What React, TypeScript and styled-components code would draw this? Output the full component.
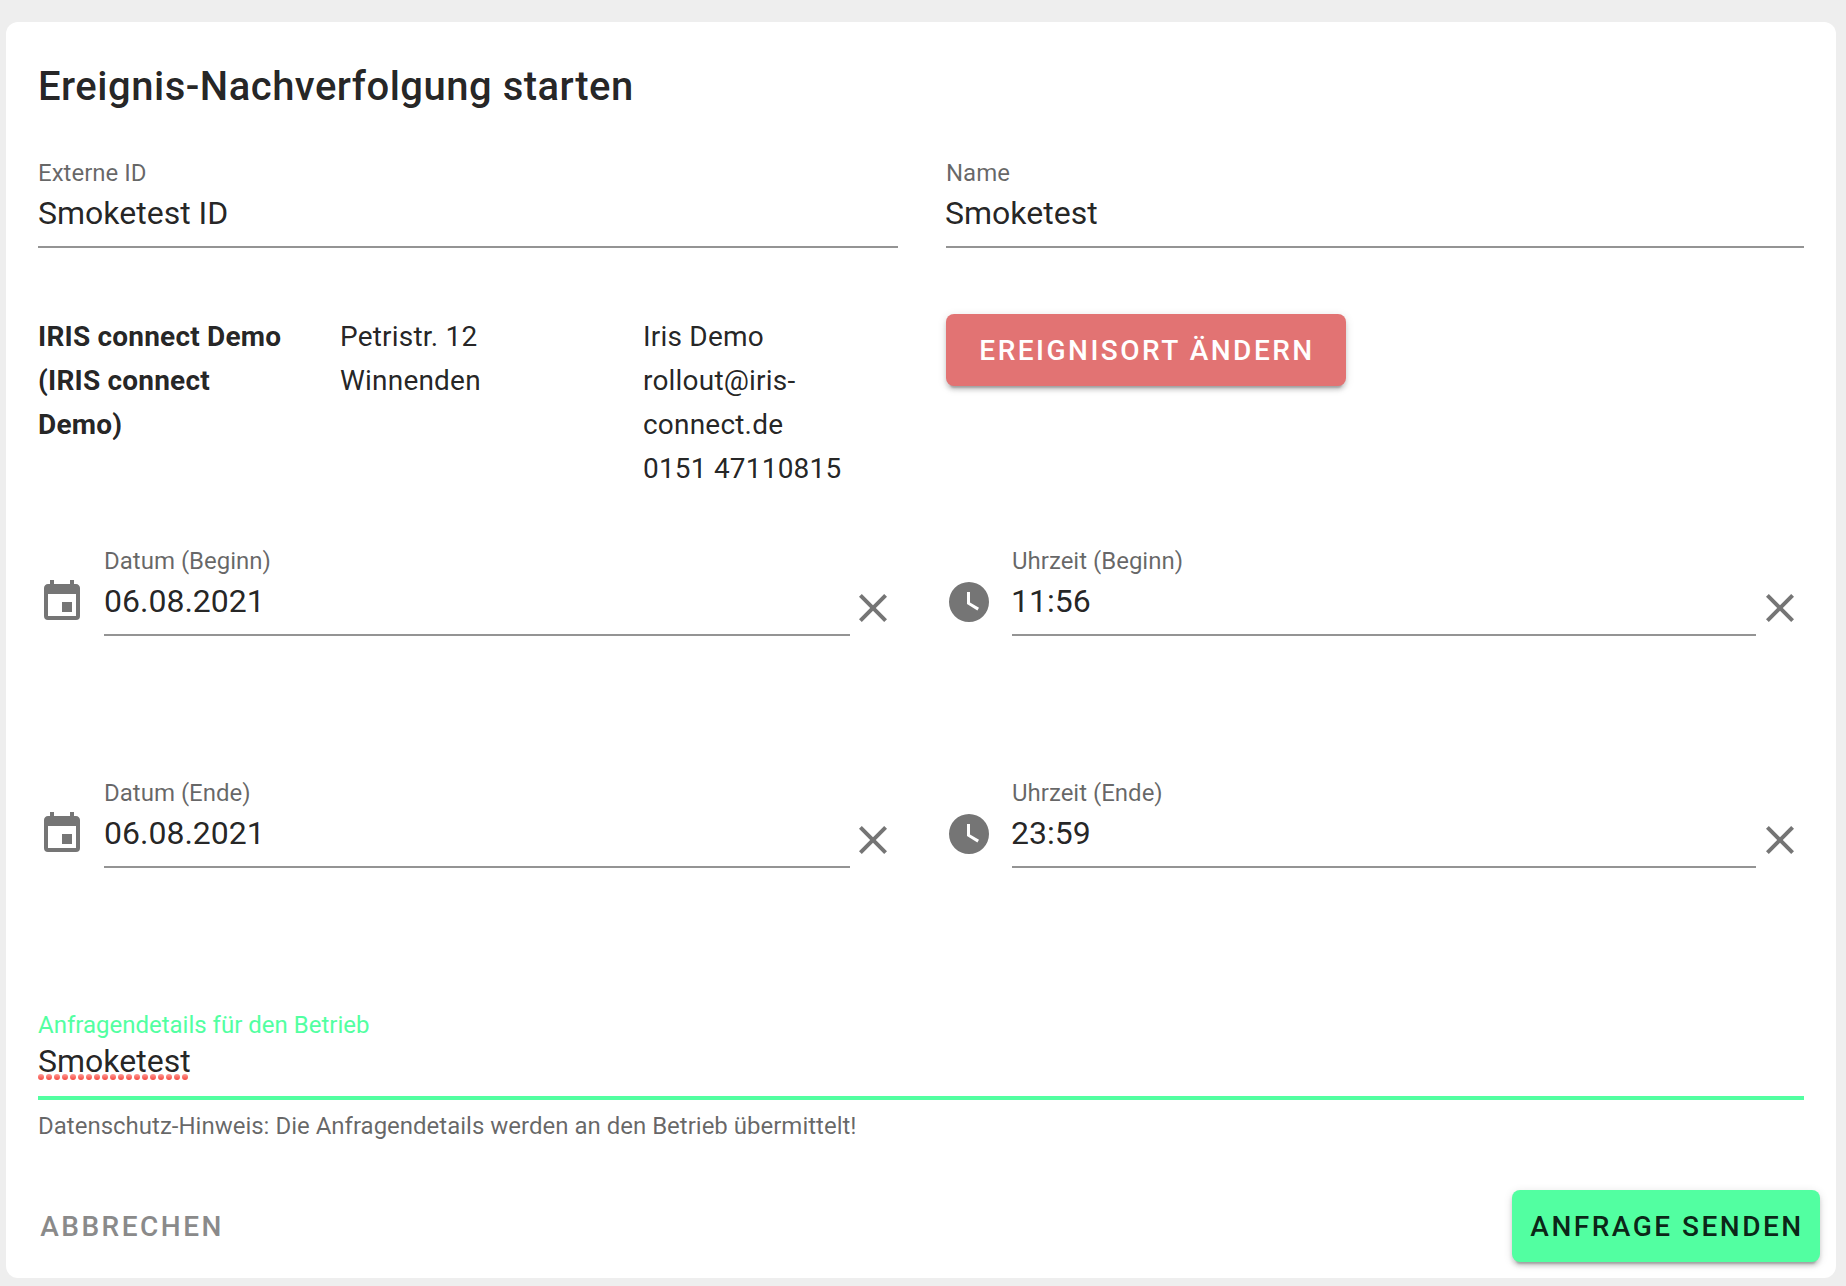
import React from "react";
import styled, { createGlobalStyle, css } from "styled-components";

const GlobalStyle = createGlobalStyle`
  *, *::before, *::after { box-sizing: border-box; }
  body {
    margin: 0;
    background: #eeeeee;
    font-family: Roboto, "Liberation Sans", sans-serif;
    color: rgba(0, 0, 0, 0.87);
  }
`;

const Page = styled.main`
  height: 1286px;
  padding: 22px 10px 8px 6px;
  overflow: hidden;
`;

const Card = styled.form`
  display: flex;
  flex-direction: column;
  height: 1256px;
  padding: 33px 0 0;
  border-radius: 12px;
  background: #ffffff;
`;

const Title = styled.h1`
  margin: 0;
  padding: 0 32px;
  font-size: 40px;
  font-weight: 500;
  line-height: 64px;
  letter-spacing: 0.5px;
`;

const Row = styled.div<{ $top: number }>`
  display: grid;
  grid-template-columns: 860px 858px;
  column-gap: 48px;
  margin-top: ${(p) => p.$top}px;
  padding: 0 32px;
`;

const Field = styled.label`
  display: flex;
  flex: 1;
  flex-direction: column;
  min-width: 0;
  height: 98px;
  border-bottom: 2px solid #949494;
`;

const Label = styled.span<{ $active?: boolean }>`
  height: 28px;
  margin-top: 9px;
  font-size: 24px;
  line-height: 28px;
  color: ${(p) => (p.$active ? "#52ffa1" : "rgba(0, 0, 0, 0.6)")};
`;

const Value = styled.span<{ $gap?: number; $shift?: number }>`
  height: 40px;
  margin-top: ${(p) => p.$gap ?? 6}px;
  margin-left: ${(p) => -(p.$shift ?? 0)}px;
  font-size: 32px;
  line-height: 40px;
`;

const IconField = styled.div`
  display: flex;
  align-items: flex-start;
`;

const Icon = styled.svg`
  flex: none;
  width: 48px;
  height: 48px;
  margin-top: 40px;
  fill: #757575;
`;

const LeadIcon = styled(Icon)<{ $shift?: number }>`
  margin-left: ${(p) => -(p.$shift ?? 0)}px;
  margin-right: ${(p) => 18 + (p.$shift ?? 0)}px;
`;

const ClearIcon = styled(Icon)<{ $shift?: number }>`
  margin-top: 46px;
  margin-left: ${(p) => -(p.$shift ?? 0)}px;
  margin-right: ${(p) => p.$shift ?? 0}px;
`;

const Venue = styled.div`
  display: grid;
  grid-template-columns: 302px 303px 1fr;
  height: 176px;
  padding-top: 1px;
  font-size: 28px;
  line-height: 44px;
  letter-spacing: 0.2px;
`;

const VenueCell = styled.div<{ $strong?: boolean }>`
  font-weight: ${(p) => (p.$strong ? 700 : 400)};
`;

const Button = styled.button<{ $kind: "danger" | "primary" | "text"; $width?: number }>`
  display: inline-flex;
  align-items: center;
  justify-content: center;
  width: ${(p) => (p.$width ? `${p.$width}px` : "auto")};
  height: 72px;
  padding: 0 0 0 ${(p) => (p.$kind === "text" ? 0 : 2)}px;
  border: 0;
  border-radius: 8px;
  font-family: inherit;
  font-size: 28px;
  font-weight: 500;
  letter-spacing: 2.5px;
  white-space: nowrap;
  text-transform: uppercase;
  ${(p) =>
    p.$kind !== "text" &&
    css`
      box-shadow: 0 6px 2px -4px rgba(0, 0, 0, 0.2), 0 4px 4px 0 rgba(0, 0, 0, 0.14),
        0 2px 10px 0 rgba(0, 0, 0, 0.12);
    `}
  ${(p) =>
    ({
      danger: "background: #e27373; color: #ffffff;",
      primary: "background: #52ffa1; color: rgba(0, 0, 0, 0.87);",
      text: "background: transparent; color: #8a8a8a;",
    })[p.$kind]}
`;

const Details = styled.label`
  display: flex;
  flex-direction: column;
  height: 98px;
  margin: 134px 32px 0;
  border-bottom: 4px solid #52ffa1;
`;

const Misspelled = styled.span`
  position: relative;
`;

const SpellingDots = styled.svg`
  position: absolute;
  left: 0;
  top: 32px;
  width: 152px;
  height: 6px;
`;

const Hint = styled.p`
  margin: 12px 32px 0;
  font-size: 24px;
  line-height: 28px;
  color: rgba(0, 0, 0, 0.6);
`;

const Actions = styled.div`
  display: flex;
  justify-content: space-between;
  margin-top: 50px;
  padding: 0 16px;
`;

const CALENDAR =
  "M19,19H5V8H19M16,1V3H8V1H6V3H5C3.89,3 3,3.89 3,5V19A2,2 0 0,0 5,21H19A2,2 0 0,0 21,19V5C21,3.89 20.1,3 19,3H18V1M17,12H12V17H17V12Z";
const CLOCK =
  "M12,2A10,10 0 0,0 2,12A10,10 0 0,0 12,22A10,10 0 0,0 22,12A10,10 0 0,0 12,2M16.2,16.2L11,13V7H12.5V12.2L17,14.9L16.2,16.2Z";
const CLOSE =
  "M19,6.41L17.59,5L12,10.59L6.41,5L5,6.41L10.59,12L5,17.59L6.41,19L12,13.41L17.59,19L19,17.59L13.41,12L19,6.41Z";

function TextField({ label, value, shift }: { label: string; value: string; shift?: number }) {
  return (
    <Field>
      <Label>{label}</Label>
      <Value $shift={shift}>{value}</Value>
    </Field>
  );
}

function PickerField({ kind, label, value }: { kind: "date" | "time"; label: string; value: string }) {
  return (
    <IconField>
      <LeadIcon viewBox="0 0 24 24" $shift={kind === "time" ? 1 : 0}>
        <path d={kind === "date" ? CALENDAR : CLOCK} />
      </LeadIcon>
      <TextField label={label} value={value} shift={kind === "time" ? 1 : 0} />
      <ClearIcon viewBox="0 0 24 24" $shift={kind === "date" ? 1 : 0}>
        <path d={CLOSE} />
      </ClearIcon>
    </IconField>
  );
}

export default function App() {
  return (
    <>
      <GlobalStyle />
      <Page>
        <Card>
          <Title>Ereignis-Nachverfolgung starten</Title>

          <Row $top={31}>
            <TextField label="Externe ID" value="Smoketest ID" />
            <TextField label="Name" value="Smoketest" shift={1} />
          </Row>

          <Row $top={66}>
            <Venue>
              <VenueCell $strong>
                IRIS connect Demo
                <br />
                (IRIS connect
                <br />
                Demo)
              </VenueCell>
              <VenueCell>
                Petristr. 12
                <br />
                Winnenden
              </VenueCell>
              <VenueCell>
                Iris Demo
                <br />
                rollout@iris-
                <br />
                connect.de
                <br />
                0151 47110815
              </VenueCell>
            </Venue>
            <div>
              <Button type="button" $kind="danger" $width={400}>
                Ereignisort ändern
              </Button>
            </div>
          </Row>

          <Row $top={48}>
            <PickerField kind="date" label="Datum (Beginn)" value="06.08.2021" />
            <PickerField kind="time" label="Uhrzeit (Beginn)" value="11:56" />
          </Row>

          <Row $top={134}>
            <PickerField kind="date" label="Datum (Ende)" value="06.08.2021" />
            <PickerField kind="time" label="Uhrzeit (Ende)" value="23:59" />
          </Row>

          <Details>
            <Label $active>Anfragendetails für den Betrieb</Label>
            <Value $gap={2}>
              <Misspelled>
                Smoketest
                <SpellingDots viewBox="0 0 152 6">
                  <defs>
                    <linearGradient id="dot" x1="0" y1="0" x2="0" y2="1">
                      <stop offset="0" stopColor="#ff9a94" />
                      <stop offset="1" stopColor="#f5473f" />
                    </linearGradient>
                  </defs>
                  {Array.from({ length: 19 }, (_, i) => (
                    <circle key={i} cx={3 + i * 8} cy={3} r={3} fill="url(#dot)" />
                  ))}
                </SpellingDots>
              </Misspelled>
            </Value>
          </Details>
          <Hint>Datenschutz-Hinweis: Die Anfragendetails werden an den Betrieb übermittelt!</Hint>

          <Actions>
            <Button type="button" $kind="text" $width={220}>
              Abbrechen
            </Button>
            <Button type="button" $kind="primary" $width={308}>
              Anfrage senden
            </Button>
          </Actions>
        </Card>
      </Page>
    </>
  );
}
